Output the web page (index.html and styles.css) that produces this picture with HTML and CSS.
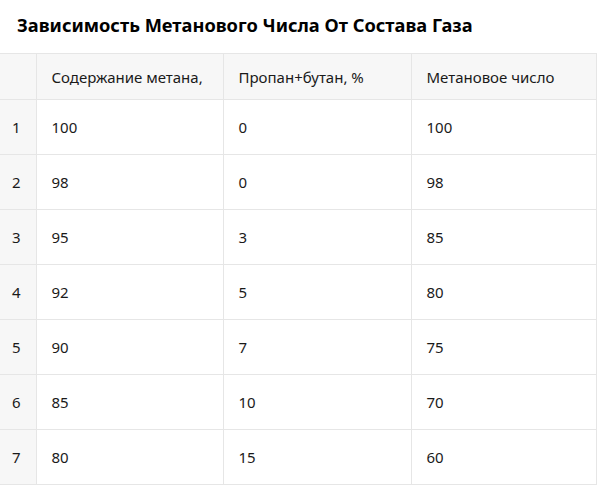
FILE: index.html
```html
<!DOCTYPE html>
<html lang="ru">
<head>
<meta charset="utf-8">
<link rel="stylesheet" href="styles.css">
</head>
<body>
<h1 class="title">Зависимость Метанового Числа От Состава Газа</h1>
<table class="data">
  <colgroup>
    <col class="c-idx"><col class="c-a"><col class="c-b"><col class="c-c">
  </colgroup>
  <thead>
    <tr><th class="idx"></th><th>Содержание метана,</th><th>Пропан+бутан, %</th><th>Метановое число</th></tr>
  </thead>
  <tbody>
    <tr><td class="idx">1</td><td>100</td><td>0</td><td>100</td></tr>
    <tr><td class="idx">2</td><td>98</td><td>0</td><td>98</td></tr>
    <tr><td class="idx">3</td><td>95</td><td>3</td><td>85</td></tr>
    <tr><td class="idx">4</td><td>92</td><td>5</td><td>80</td></tr>
    <tr><td class="idx">5</td><td>90</td><td>7</td><td>75</td></tr>
    <tr><td class="idx">6</td><td>85</td><td>10</td><td>70</td></tr>
    <tr><td class="idx">7</td><td>80</td><td>15</td><td>60</td></tr>
  </tbody>
</table>
</body>
</html>
```
FILE: styles.css
```css
html, body {
  margin: 0;
  padding: 0;
  background: #ffffff;
}
body {
  font-family: "Noto Sans", "Open Sans", sans-serif;
  color: #1a1a1a;
}
.title {
  margin: 0;
  padding: 12px 0 0 17px;
  height: 53px;
  box-sizing: border-box;
  font-size: 18.25px;
  font-weight: 700;
  line-height: 26px;
  color: #000;
}
.data {
  border-collapse: collapse;
  table-layout: fixed;
  width: 596px;
  font-size: 15px;
}
.c-idx { width: 36px; }
.c-a { width: 187px; }
.c-b { width: 188px; }
.c-c { width: 185px; }
.data th, .data td {
  text-align: left;
  font-weight: 400;
  padding: 0 0 0 15px;
  border-right: 1px solid #e6e6e6;
  border-bottom: 1px solid #e6e6e6;
  white-space: nowrap;
  overflow: hidden;
}
.data th {
  height: 45px;
  background: #f7f7f7;
  border-top: 1px solid #e6e6e6;
  color: #1a1a1a;
}
.data td {
  height: 54px;
}
.data .idx {
  padding-left: 12px;
  background: #f7f7f7;
}
```
